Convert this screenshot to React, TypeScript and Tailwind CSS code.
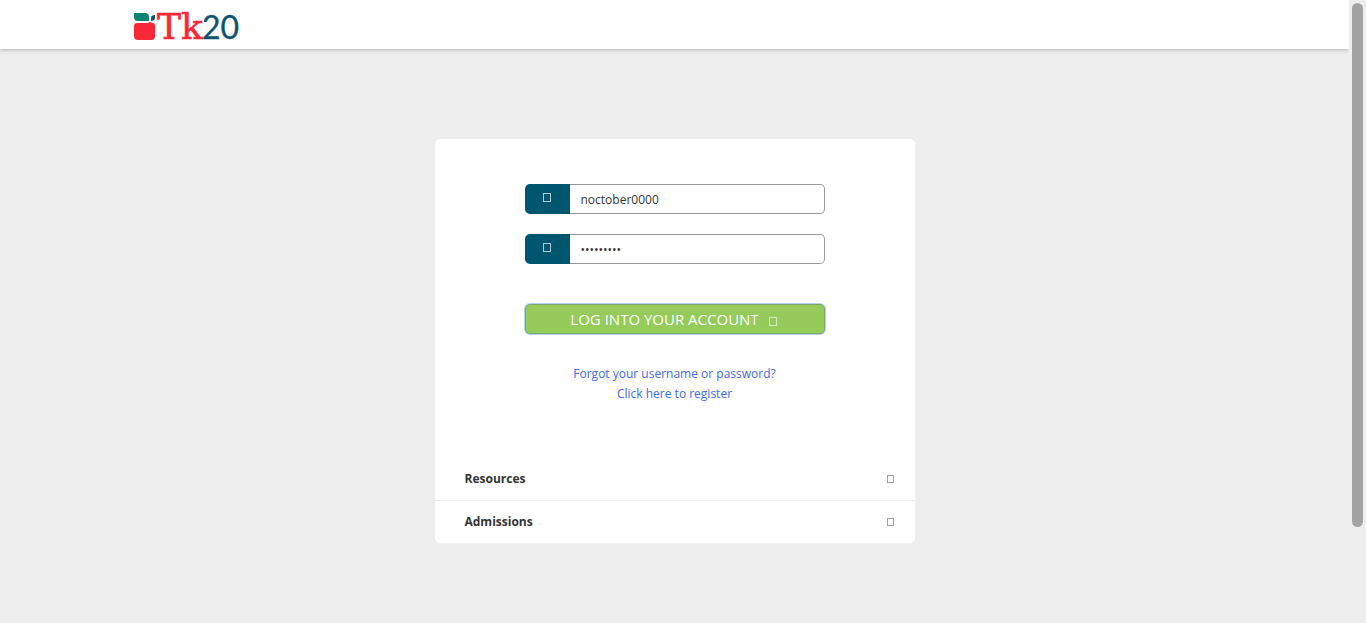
import { useState } from "react";

function Logo() {
  return (
    <svg width="116" height="49" viewBox="0 -10 116 49" role="img" aria-label="Tk20" className="block">
      <path d="M1 3H12Q16 3 16 7V11H5Q1 11 1 7Z" fill="#0b8370" />
      <path d="M18 11V8Q18 5 22 5V7Q22 11 18 11Z" fill="#0b5470" />
      <path d="M4 13H14L17 12L20 13Q22 13 22 16V26Q22 30 18 30H5Q1 30 1 26V16Q1 13 4 13Z" fill="#f62837" />
      <text x="24" y="29" fontSize="36" fontFamily="'DejaVu Serif', serif" fill="#f62837" stroke="#f62837" strokeWidth="0.6">Tk</text>
      <text x="69" y="29" fontSize="32" fontFamily="Lato, sans-serif" fill="#0b5470" stroke="#0b5470" strokeWidth="0.3">20</text>
    </svg>
  );
}

function Glyph({ className }: { className: string }) {
  return <span aria-hidden="true" className={`box-border block shrink-0 border ${className}`} />;
}

type FieldProps = { id: string; label: string; type: string; initial: string };

function Field({ id, label, type, initial }: FieldProps) {
  const [value, setValue] = useState(initial);
  return (
    <div className="flex h-[30px]">
      <label htmlFor={id} className="flex w-[45px] shrink-0 justify-center rounded-l-[5px] bg-[#00566f] pt-[9px]">
        <Glyph className="h-[9px] w-2 border-[#b5cbd3]" />
      </label>
      <input
        id={id}
        type={type}
        aria-label={label}
        value={value}
        onChange={(e) => setValue(e.target.value)}
        className="min-w-0 flex-1 rounded-r-[5px] border border-l-0 border-[#999] bg-white px-[11px] pt-[2px] text-[12px] leading-5 text-[#333] outline-none"
      />
    </div>
  );
}

function Section({ title }: { title: string }) {
  return (
    <div>
      <button type="button" className="flex h-[42px] w-full items-center justify-between pl-[30px] pr-[21px] text-left text-[12px] font-bold text-[#333]">
        {title}
        <Glyph className="h-2 w-[7px] border-[#9ba39b]" />
      </button>
    </div>
  );
}

export default function App() {
  return (
    <div className="flex min-h-screen bg-[#eee] font-['Open_Sans',sans-serif] text-[12px] text-[#333]">
      <div className="flex min-w-0 flex-1 flex-col">
        <header className="h-[49px] bg-white pl-[133px] shadow-[0_1px_4px_rgba(0,0,0,0.25)]">
          <a href="#" className="inline-block"><Logo /></a>
        </header>
        <main className="flex justify-center pb-20 pt-[90px]">
          <div className="w-[480px] rounded-[5px] bg-white">
            <form className="mx-auto w-[300px] pt-[45px]" onSubmit={(e) => e.preventDefault()}>
              <div className="flex flex-col gap-5">
                <Field id="username" label="Username" type="text" initial="noctober0000" />
                <Field id="password" label="Password" type="password" initial="october00" />
              </div>
              <button type="submit" className="mt-10 flex h-[30px] w-full items-center justify-center gap-[10px] rounded-[5px] border border-[#78a86b] bg-[#94cb5b] pr-[2px] text-[15px] text-white shadow-[0_0_0_1px_#b5d2f5]">
                LOG INTO YOUR ACCOUNT
                <Glyph className="mt-1 h-[9px] w-2 border-[#d4eabd]" />
              </button>
              <div className="mt-[30px] flex flex-col items-center leading-5 text-[#4169e8]">
                <a href="#">Forgot your username or password?</a>
                <a href="#">Click here to register</a>
              </div>
            </form>
            <div className="mt-[54px] divide-y divide-[#ededed]">
              <Section title="Resources" />
              <Section title="Admissions" />
            </div>
          </div>
        </main>
      </div>
      <div aria-hidden="true" className="sticky top-0 flex h-screen w-[17px] shrink-0 justify-center bg-[#eee] pt-[3px]">
        <div className="h-[84.5%] w-[11px] rounded-full bg-[#a3a3a3]" />
      </div>
    </div>
  );
}
